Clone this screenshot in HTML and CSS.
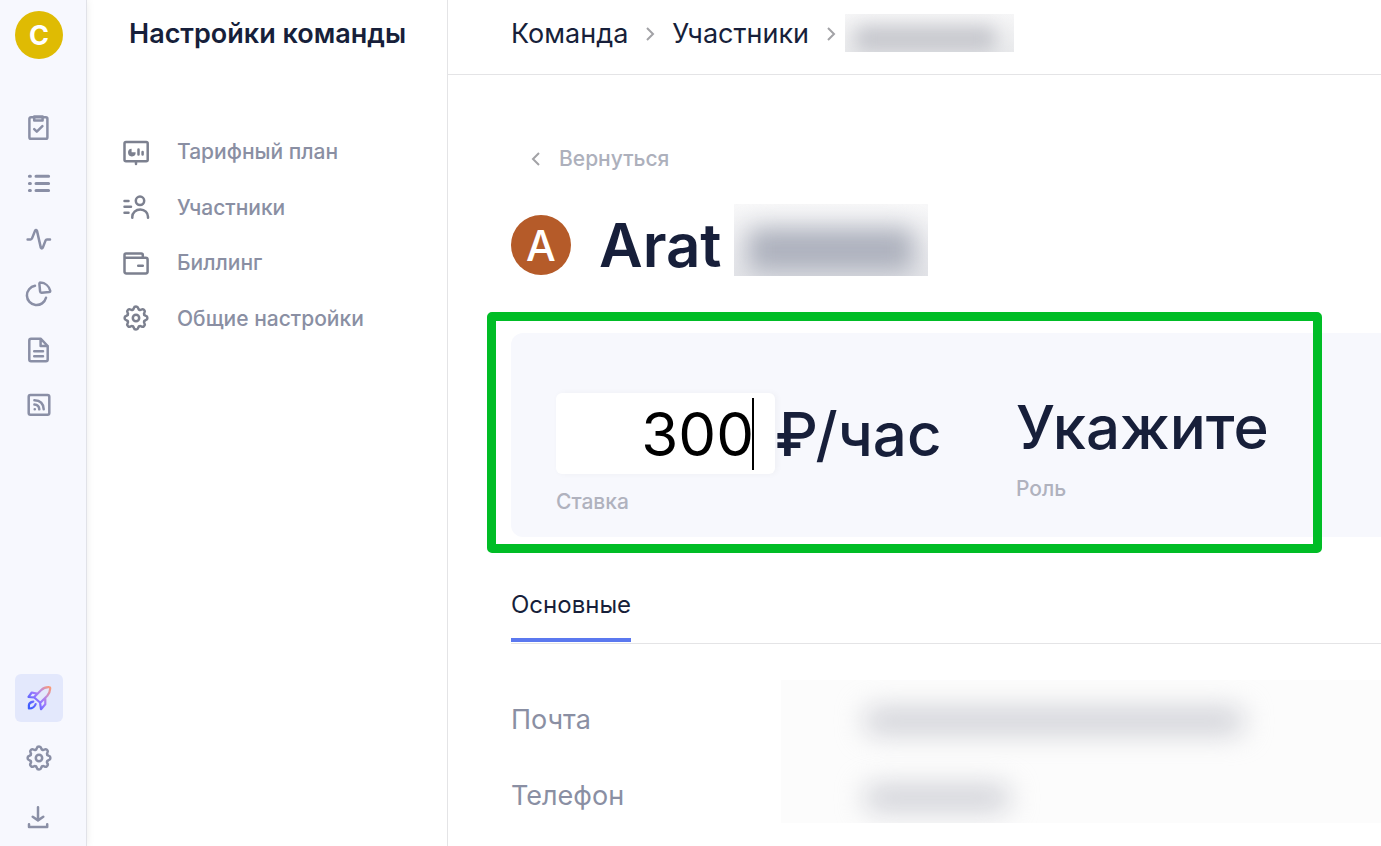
FILE: index.html
```html
<!DOCTYPE html>
<html lang="ru">
<head>
<meta charset="utf-8">
<meta name="viewport" content="width=device-width, initial-scale=1">
<title>Настройки команды</title>
<link rel="stylesheet" href="styles.css">
</head>
<body>
<svg class="defs" aria-hidden="true">
  <symbol id="gear" viewBox="-14 -14 28 28">
    <g id="quarter">
      <path d="M-3.4 -8.2C-2.5 -8.3 -2.3 -9 -2.1 -9.9Q-1.8 -11.4 0 -11.4Q1.8 -11.4 2.1 -9.9C2.3 -9 2.5 -8.3 3.4 -8.2"/>
      <path transform="rotate(45)" d="M-3.4 -8.2C-2.5 -8.3 -2.3 -9 -2.1 -9.9Q-1.8 -11.4 0 -11.4Q1.8 -11.4 2.1 -9.9C2.3 -9 2.5 -8.3 3.4 -8.2"/>
    </g>
    <use href="#quarter" transform="rotate(90)"/>
    <use href="#quarter" transform="rotate(180)"/>
    <use href="#quarter" transform="rotate(270)"/>
    <circle r="3.2"/>
  </symbol>
</svg>
<div class="app">
  <nav class="rail" aria-label="Разделы">
    <button class="avatar avatar-team" type="button">C</button>
    <div class="rail-main">
      <a class="rail-link" href="#" aria-label="Задачи"><svg class="icon" viewBox="0 0 28 28"><rect x="4.4" y="3.2" width="18" height="21.6" rx="1.6"/><rect x="9.2" y="2.6" width="8.4" height="4"/><path d="M9.2 15.2l2.6 2.5 5.6-5.6"/></svg></a>
      <a class="rail-link" href="#" aria-label="Список"><svg class="icon icon-list" viewBox="0 0 28 28"><path d="M4.4 7.3h1M11 7.3h12.6M4.4 14.4h1M11 14.4h12.6M4.4 21.5h1M11 21.5h12.6"/></svg></a>
      <a class="rail-link" href="#" aria-label="Активность"><svg class="icon" viewBox="0 0 28 28"><path d="M2.6 14.4h3q1 0 1.4-1L10 5.9q1-1.7 2 0L15.8 22.6q1 1.7 2 0l2.8-7.2q.4-1 1.4-1h3"/></svg></a>
      <a class="rail-link" href="#" aria-label="Отчёты"><svg class="icon" viewBox="0 0 28 28"><path d="M10 5.8a9.7 9.7 0 1 0 11 12M15.4 2.6c4.8.3 8.8 3.7 9.8 8.2q.2 1.2-1 1.3l-7.5.6q-1.5.1-1.6-1.2l-.7-7.5q0-1.5 1-1.4z"/></svg></a>
      <a class="rail-link" href="#" aria-label="Документы"><svg class="icon" viewBox="0 0 28 28"><path d="M15.6 2.7H6q-1.700 0-1.700 1.700v19.200q0 1.700 1.700 1.700h15q1.700 0 1.700-1.700V10zM15.600 2.700V10h7.100M9.200 15.300h8.800M9.200 20.200h8.800"/></svg></a>
      <a class="rail-link" href="#" aria-label="Лента"><svg class="icon" viewBox="0 0 28 28"><rect x="3.700" y="4" width="20.600" height="19.800" rx="1.700"/><path d="M9.700 18.200h.1M9.400 13.600q4.600.3 4.900 4.700M9.400 9.200q8.900.2 9.300 9.100"/></svg></a>
    </div>
    <div class="rail-bottom">
      <a class="rail-tile rail-tile-active" href="#" aria-label="Старт"><svg class="icon rocket" viewBox="0 0 28 28">
        <defs><linearGradient id="flare" gradientUnits="userSpaceOnUse" x1="4" y1="22" x2="25" y2="4"><stop offset="0" stop-color="#3d5cff"/><stop offset=".45" stop-color="#9a78ff"/><stop offset=".7" stop-color="#c08ad8"/><stop offset="1" stop-color="#f79a7c"/></linearGradient></defs>
        <path d="M9 13.200L16 6.200Q19.500 3 24 3.200q1.300 0 1.200 1.400Q25 8.500 22.300 11.700L15.300 18.800zM12 9.600L6.800 8.500 3.500 12.900 9 13.500M20.300 14.200v6L16 25.200l-.9-6.200M8.300 17.600Q4.200 18.300 3.900 21v3.500Q9.500 24.300 10.700 20"/>
      </svg></a>
      <a class="rail-tile" href="#" aria-label="Настройки"><svg class="icon"><use href="#gear"/></svg></a>
      <a class="rail-tile" href="#" aria-label="Скачать"><svg class="icon" viewBox="0 0 28 28"><path d="M13 3.200v12.600M7.700 12.800L13 16.400l5.300-3.600M4 20.300v2.600h18.200v-2.600"/></svg></a>
    </div>
  </nav>

  <aside class="panel">
    <h2 class="panel-title">Настройки команды</h2>
    <nav class="menu">
      <a class="menu-link" href="#"><svg class="icon" viewBox="0 0 28 28"><rect x="2.500" y="4" width="23.200" height="19.300" rx="1.500"/><path d="M14 23.500v2.400M16.500 11.500v5M20.600 14v2.500"/><path class="solid" d="M9.600 10.800v3.400h4a3.800 3.800 0 1 1-4-3.400z"/></svg>Тарифный план</a>
      <a class="menu-link" href="#"><svg class="icon" viewBox="0 0 28 28"><path d="M2.500 8h4M2.500 13.800h6.500M2.500 19.700h4M10.300 24.700v-1c0-4 3.500-7.300 8-7.300s7.700 3.300 7.700 7.300v1"/><circle cx="18" cy="7.800" r="4.200"/></svg>Участники</a>
      <a class="menu-link" href="#"><svg class="icon" viewBox="0 0 28 28"><path d="M2.500 8.500V6q0-1.500 1.500-1.500h15.300q1.500 0 1.500 1.500v2.700M2.500 8.500v14q0 1.900 1.900 1.900h19.300q1.900 0 1.900-1.900V10.600q0-1.900-1.900-1.900H2.700M16.200 16.800h4.600"/></svg>Биллинг</a>
      <a class="menu-link" href="#"><svg class="icon"><use href="#gear"/></svg>Общие настройки</a>
    </nav>
  </aside>

  <main class="main">
    <header class="topbar">
      <a class="crumb" href="#">Команда</a>
      <svg class="chevron" viewBox="0 0 10 14"><path d="M2 1l6 6-6 6"/></svg>
      <a class="crumb" href="#">Участники</a>
      <svg class="chevron" viewBox="0 0 10 14"><path d="M2 1l6 6-6 6"/></svg>
      <span class="mask mask-crumb"><span class="smudge"></span></span>
    </header>

    <div class="content">
      <a class="back" href="#"><svg class="chevron" viewBox="0 0 10 14"><path d="M8 1L2 7l6 6"/></svg>Вернуться</a>

      <div class="person">
        <span class="avatar avatar-person">A</span>
        <h1 class="person-name">Arat</h1>
        <span class="mask mask-name"><span class="smudge"></span></span>
      </div>

      <section class="card">
        <div class="field">
          <div class="rate">
            <span class="rate-box"><input class="rate-input" id="rate" type="text" value="300"><span class="caret"></span></span>
            <span class="rate-unit">₽/час</span>
          </div>
          <label class="field-label" for="rate">Ставка</label>
        </div>
        <div class="field">
          <button class="role" id="role" type="button">Укажите</button>
          <label class="field-label" for="role">Роль</label>
        </div>
        <div class="frame"></div>
      </section>

      <div class="tabs" role="tablist">
        <button class="tab" type="button" role="tab" aria-selected="true">Основные</button>
      </div>

      <div class="details">
        <div class="detail-labels">
          <span class="detail-label">Почта</span>
          <span class="detail-label">Телефон</span>
        </div>
        <div class="mask mask-details">
          <span class="smudge smudge-mail"></span>
          <span class="smudge smudge-phone"></span>
        </div>
      </div>
    </div>
  </main>
</div>
</body>
</html>
```
FILE: styles.css
```css
* {
  box-sizing: border-box;
}

body {
  margin: 0;
  background: #fff;
  color: #171f3a;
  font-family: Inter, "Noto Sans", sans-serif;
}

a {
  color: inherit;
  text-decoration: none;
}

button,
input {
  padding: 0;
  border: 0;
  background: none;
  color: inherit;
  font: inherit;
}

.defs {
  position: absolute;
  width: 0;
  height: 0;
}

.icon {
  flex: none;
  width: 28px;
  height: 28px;
  fill: none;
  stroke: #8a8fa6;
  stroke-width: 2.5;
  stroke-linecap: round;
  stroke-linejoin: round;
}

.icon-list {
  stroke-width: 3;
}

.app {
  display: flex;
  min-height: 100vh;
  overflow: hidden;
}

/* Icon rail */
.rail {
  z-index: 1;
  display: flex;
  flex: none;
  flex-direction: column;
  width: 87px;
  padding: 11px 23px 4px 15px;
  border-right: 1px solid #e1e2e8;
  background: #f7f8fe;
  box-shadow: 0 0 8px rgba(0, 0, 0, 0.08);
}

.avatar {
  display: flex;
  flex: none;
  align-items: center;
  justify-content: center;
  border-radius: 50%;
  color: #fff;
}

.avatar-team {
  width: 48px;
  height: 48px;
  background: #dfbb03;
  font-size: 27px;
  font-weight: 700;
}

.rail-main {
  display: flex;
  flex-direction: column;
  height: 333px;
  margin-top: 41px;
}

.rail-link {
  display: flex;
  flex: 1;
  align-items: center;
  justify-content: center;
}

.rail-bottom {
  display: flex;
  flex-direction: column;
  gap: 12px;
  margin-top: auto;
}

.rail-tile {
  display: flex;
  align-items: center;
  justify-content: center;
  height: 48px;
  border-radius: 6px;
}

.rail-tile-active {
  background: #e3e8fc;
}

.rocket {
  stroke: url(#flare);
  stroke-width: 2.2;
}

/* Settings panel */
.panel {
  flex: none;
  width: 361px;
  padding-top: 18px;
  border-right: 1px solid #e4e4e6;
}

.panel-title {
  margin: 0 0 74px 42px;
  font-size: 27px;
  font-weight: 600;
  line-height: 32px;
}

.menu {
  display: flex;
  flex-direction: column;
  height: 222px;
  padding-left: 35px;
}

.menu-link {
  display: flex;
  flex: 1;
  align-items: center;
  gap: 27px;
  color: #8a8fa3;
  font-size: 21px;
  font-weight: 500;
}

.menu .icon {
  stroke: #7c808f;
}

.menu .solid {
  fill: #7c808f;
  stroke: none;
}

/* Main column */
.main {
  flex: 1;
  min-width: 0;
}

.topbar {
  display: flex;
  align-items: center;
  height: 75px;
  padding: 0 0 6px 63px;
  border-bottom: 1px solid #e4e4e6;
  font-size: 27px;
  line-height: 32px;
}

.chevron {
  flex: none;
  width: 10px;
  height: 14px;
  margin: 0 17px;
  fill: none;
  stroke: #a2a2a6;
  stroke-width: 2;
}

.content {
  padding: 70px 0 0 63px;
}

.back {
  display: flex;
  align-items: center;
  gap: 18px;
  padding-left: 20px;
  color: #adb0bc;
  font-size: 21px;
  font-weight: 500;
  line-height: 28px;
}

.back .chevron {
  margin: 0;
}

.person {
  display: flex;
  align-items: center;
  margin: 31px 0 47px;
}

.avatar-person {
  width: 60px;
  height: 60px;
  background: #b55b29;
  font-size: 42px;
  font-weight: 500;
}

.person-name {
  margin: 0 12px 0 28px;
  font-size: 60px;
  font-weight: 600;
  line-height: 72px;
}

/* Hidden personal data */
.mask {
  position: relative;
  display: block;
  overflow: hidden;
}

.smudge {
  position: absolute;
  border-radius: 8px;
}

.mask-crumb {
  width: 169px;
  height: 38px;
  margin: 0 0 2px -8px;
  background: linear-gradient(#f6f6f7, #e9eaec);
}

.mask-crumb .smudge {
  inset: 12px 18px 0 10px;
  background: #c6c7cd;
  filter: blur(9px);
}

.mask-name {
  width: 194px;
  height: 72px;
  margin-bottom: 10px;
  background: linear-gradient(#f8f8f9, #e4e5e9);
}

.mask-name .smudge {
  inset: 24px 14px 4px 14px;
  background: #adb1bd;
  filter: blur(12px);
}

.mask-details {
  flex: 1;
  height: 143px;
  background: #fcfcfc;
}

.smudge-mail,
.smudge-phone {
  left: 84px;
  height: 24px;
  background: #cbccd3;
  filter: blur(14px);
}

.smudge-mail {
  top: 29px;
  width: 378px;
}

.smudge-phone {
  top: 106px;
  width: 144px;
}

/* Rate and role */
.card {
  position: relative;
  display: flex;
  align-items: flex-start;
  padding: 60px 0 21px 45px;
  border-radius: 12px 0 0 12px;
  background: #f7f8fd;
}

.field {
  display: flex;
  flex-direction: column;
  align-items: flex-start;
  gap: 14px;
}

.field:first-child {
  width: 460px;
}

.rate {
  display: flex;
  align-items: center;
  font-size: 60px;
}

.rate-box {
  position: relative;
}

.rate-input {
  display: block;
  width: 219px;
  height: 81px;
  padding-right: 21px;
  border-radius: 6px;
  background: #fff;
  box-shadow: 2px 0 6px rgba(0, 0, 0, 0.04);
  color: #000;
  font-weight: 400;
  text-align: right;
}

.caret {
  position: absolute;
  top: 5px;
  right: 21px;
  width: 2px;
  height: 72px;
  background: #000;
}

.rate-unit,
.role {
  font-weight: 500;
}

.role {
  font-size: 60px;
  line-height: 68px;
}

.field-label {
  color: #b0b2be;
  font-size: 21px;
  font-weight: 500;
  line-height: 28px;
}

.frame {
  position: absolute;
  inset: -21px 59px -16px -24px;
  border: 9px solid #00bd26;
  border-radius: 5px;
}

/* Tabs and details */
.tabs {
  display: flex;
  margin-top: 52px;
  padding-bottom: 1px;
  border-bottom: 1px solid #e4e4e6;
}

.tab {
  padding-bottom: 17px;
  border-bottom: 4px solid #5b78ef;
  font-size: 24px;
  line-height: 32px;
}

.details {
  display: flex;
  padding-top: 36px;
}

.detail-labels {
  display: flex;
  flex-direction: column;
  width: 270px;
  padding-top: 2px;
}

.detail-label {
  color: #8a8fa3;
  font-size: 27px;
  line-height: 76px;
}
```
